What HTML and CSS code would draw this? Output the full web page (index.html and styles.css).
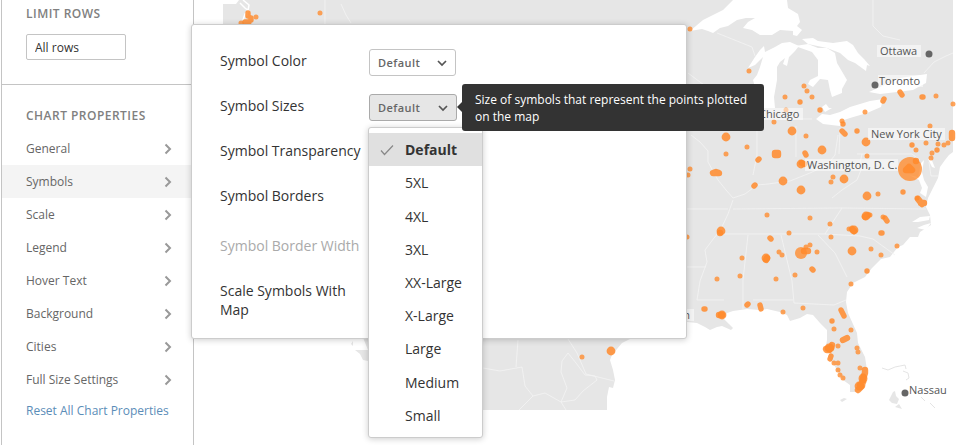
FILE: index.html
```html
<!DOCTYPE html>
<html lang="en">
<head>
    <meta charset="UTF-8">
    <meta name="viewport" content="width=device-width, initial-scale=1.0">
    <title>Chart Properties</title>
    <link rel="stylesheet" href="styles.css">
</head>
<body>

<!-- shared icons -->
<svg class="sprite" aria-hidden="true">
    <symbol id="arrow-right" viewBox="0 0 8 12"><path d="M1.5 1.5L6 6L1.5 10.5"/></symbol>
    <symbol id="arrow-down" viewBox="0 0 10 8"><path d="M1 2L5 6L9 2"/></symbol>
    <symbol id="check" viewBox="0 0 14 12"><path d="M1 6.5L4.5 10.5L13 1.5"/></symbol>
</svg>

<div class="page">
    <aside class="sidebar">
        <section class="section">
            <h2><label for="limit">LIMIT ROWS</label></h2>
            <input class="limit" id="limit" type="text" value="All rows">
        </section>

        <section class="section">
            <h2>CHART PROPERTIES</h2>
            <nav class="props">
                <button class="prop">General <svg><use href="#arrow-right"/></svg></button>
                <button class="prop active">Symbols <svg><use href="#arrow-right"/></svg></button>
                <button class="prop">Scale <svg><use href="#arrow-right"/></svg></button>
                <button class="prop">Legend <svg><use href="#arrow-right"/></svg></button>
                <button class="prop">Hover Text <svg><use href="#arrow-right"/></svg></button>
                <button class="prop">Background <svg><use href="#arrow-right"/></svg></button>
                <button class="prop">Cities <svg><use href="#arrow-right"/></svg></button>
                <button class="prop">Full Size Settings <svg><use href="#arrow-right"/></svg></button>
            </nav>
            <a class="reset" href="#">Reset All Chart Properties</a>
        </section>
    </aside>

    <main class="chart">
        <svg class="map" viewBox="194 0 765 445">
            <!-- land -->
            <path class="land" d="M223 4H236L239 0H953V152L949 155L945 160L940 167L938 178L933 188L928 198L926 207L930 215L931 225L920 232L918 237L910 237L903 245L898 247L890 257L881 259L872 268L865 277L853 283L847 292L846 302L848 313L857 333L858 343L865 357L867 370L865 383L857 392H850V385L843 380L837 370L833 363L828 357L830 353L825 350L827 340V330L820 323L813 315L807 314L800 318L790 321L787 315L780 312L767 309L760 310L747 309L733 311L727 313L723 318L729 324L733 328L731 330L722 326L717 327L710 330L705 327L697 323L687 322L660 323L630 339L622 343L612 355L610 360L613 370L615 380L613 388L609 387L607 397V410H400L368 361L363 360L360 354L355 350L368 350L360 330L223 300Z"/>
            <path class="land" d="M351 344L353 341V346Z M840 400L844 398L847 399L842 402Z M889 400L893 392L895 391L896 396L899 399L897 404L892 403Z M895 407L899 404L902 409Z"/>
            <path class="islands" d="M882 368L888 370L895 367L905 365L906 369 M903 371L908 373L909 378L906 380 M921 397L925 401 M930 403L935 408"/>

            <!-- water -->
            <path class="water" d="M690 31L703 20L723 10L733 0H787L788 8L798 14L800 22L797 26L802 30L797 36L793 35V31L780 30L772 35H760L752 30L743 28L748 22L755 18L746 18L737 20L728 26L720 28L713 33L708 31L702 29Z"/>
            <path class="water" d="M748 68L755 57L760 50L764 46L765 52L775 47L782 43L790 42L799 46L795 51L789 57L787 66L783 64L785 58L780 62L777 67V80L774 97L775 108H763L758 95L755 87L753 80L757 75L760 67L763 57L755 65Z"/>
            <path class="water" d="M795 46L808 44L818 48L827 48L835 53L837 63L847 80L842 89V93L832 97L830 90L828 80L820 79L813 87L808 84L810 80L818 76L818 60L812 52Z"/>
            <path class="water" d="M802 39L813 38L818 41L833 43L847 41L853 45L858 53L864 59L870 66L867 65L866 71L855 63L848 60L840 53L827 48L808 44Z"/>
            <path class="water" d="M822 107L826 104L829 108L832 108L825 112Z"/>
            <path class="water" d="M816 119L822 114L830 115L840 112L850 107L860 104L870 101L883 99L881 107L867 113L850 118L844 120L840 126L823 124Z"/>
            <path class="water" d="M869 92L880 87L900 78L927 74L926 83L913 90L897 92L880 94Z"/>
            <path class="water" d="M921 163L924 160L922 172L924 180L928 187L926 197L920 193L922 188L919 180L909 175L918 177Z M928 159L931 158L935 168L932 167Z M912 222L920 217L930 216L929 220L918 222Z M917 228L924 225L931 223L926 230Z"/>
            <path class="sound" d="M240 3L245 8L249 11L245 14L243 20 M243 0L249 5L247 16"/>

            <!-- borders -->
            <path class="lines" d="M325 0V24 M341 4L346 15L351 23 M873 0V26L883 36L900 40 M717 33L732 39L752 47L755 56 M688 73L704 85L708 95
                M924 73L934 62L946 56L953 53 M691 135L700 142L708 151V162L718 180L726 190L733 198L745 194L757 185L768 184L790 181L810 173L827 165L835 155L838 135
                M757 125V155L753 175 M796 126V157 M775 119H812 M840 128L839 154 M857 154H912L920 160 M862 154L860 163
                M733 200L728 214L720 231L714 238L705 250L707 262L700 281L697 300H724 M687 209H728 M733 209L842 208L926 209 M722 234H825L842 208 M825 234L860 236L873 239L895 255
                M748 235L743 280L743 309 M781 235L792 281L794 303L834 305L846 300 M818 235L835 253L847 277 M753 300H793 M832 198L842 190L857 180L863 165 M687 267H706 M929 162L931 176H938
                M483 368L500 371L522 367L525 386L533 396L545 393L561 402L575 400L583 391L597 380L595 376L585 375L576 363L568 353L562 361L561 372L567 388L561 402L566 410 M518 340L516 367 M568 339L577 353L586 374L614 381 M533 396L519 410"/>

            <!-- points: small, medium, large -->
            <path class="dots small" d="M320 13h0 M690 29h0 M749 71h0 M804 86h0 M807 91h0 M812 97h0 M785 97h0 M786 110h0 M774 122h0 M842 121h0 M865 112h0 M936 96h0 M930 126h0 M953 104h0 M747 147h0 M726 154h0 M690 169h0 M688 175h0 M806 136h0 M867 156h0 M833 177h0 M831 182h0 M878 194h0 M916 150h0 M926 143h0 M932 153h0 M931 158h0 M944 145h0 M948 143h0 M938 144h0 M917 198h0 M767 215h0 M810 218h0 M830 224h0 M883 217h0 M870 215h0 M789 233h0 M831 237h0 M897 246h0 M687 237h0 M849 229h0 M742 258h0 M779 252h0 M782 255h0 M806 247h0 M810 245h0 M817 252h0 M795 275h0 M776 279h0 M740 276h0 M717 279h0 M871 249h0 M881 255h0 M851 284h0 M783 312h0 M803 308h0 M834 329h0 M851 330h0 M838 346h0 M857 348h0 M858 352h0 M834 363h0 M838 363h0 M838 370h0 M840 375h0 M843 378h0 M860 368h0 M582 357h0 M256 17h0 M241 23h0"/>
            <path class="dots pair" d="M800 102h0 M820 110h0 M843 124h0 M884 99l-1 2 M900 92l2 3 M922 97l1 0 M842 131l3 3 M857 131h0 M759 159l-1 1 M755 185l-1 1 M903 192h0 M912 145h0 M937 150h0 M805 153l1 2 M885 218l2 3 M881 233l1 0 M770 238l1 1 M812 269l1 1 M867 271h0 M832 321h0 M748 304l-1 1 M760 305l1 4 M704 309l1 0 M841 310l3 6 M831 356l-1 3 M248 13v3 M245 22h4 M251 18v2"/>
            <path class="dots medium" d="M726 137h0 M792 131h0 M822 150h0 M866 142h0 M783 181h0 M801 190h0 M844 179h0 M867 196h0 M801 164h0 M866 216h0 M721 231h0 M854 230h0 M766 258h0 M852 251h0 M611 351h0 M722 315h0"/>
            <path class="dots cluster" d="M852 229l2 2 M766 260l1 -2 M804 251l4 0 M719 315h3 M826 349l5 -1l1 -3 M827 350h2 M843 340l4 -2 M865 370v3l-2 6l-1 7l-4 4 M860 385l3 -3 M918 199l4 5 M921 203h3 M865 217l3 -2 M802 163l2 1 M720 233h0 M775 153h3v2h-3z M713 173h6l-3 -1z M952 133v5"/>
            <path class="dots medium" d="M863 378v1 M859 386h1 M829 348h1"/>
            <circle class="dot" cx="801" cy="253" r="6"/>
            <circle class="dot" cx="910" cy="169" r="12"/>
            <path class="dots cluster" d="M906 170l3 -3l3 3z M916 161h0"/>

            <!-- cities -->
            <g class="tags">
                <rect x="877" y="45" width="44" height="12"/>
                <rect x="878" y="75" width="45" height="12"/>
                <rect x="758" y="108" width="45" height="12"/>
                <rect x="868" y="128" width="77" height="12"/>
                <rect x="805" y="159" width="93" height="12"/>
                <rect x="680" y="309" width="14" height="12"/>
            </g>
            <g class="towns">
                <circle cx="929" cy="54" r="3.5"/>
                <circle cx="875" cy="85" r="3.5"/>
                <circle cx="905" cy="393" r="3.5"/>
            </g>
            <g class="cities">
                <text x="880" y="55">Ottawa</text>
                <text x="879" y="85">Toronto</text>
                <text x="759" y="118">Chicago</text>
                <text x="871" y="138">New York City</text>
                <text x="807" y="169">Washington, D. C.</text>
                <text x="690" y="319" text-anchor="end">Houston</text>
                <text x="909" y="394">Nassau</text>
            </g>
        </svg>
    </main>

    <div class="panel">
        <div class="row">
            <label for="color">Symbol Color</label>
            <div class="picker">
                <select id="color"><option>Default</option></select>
                <svg class="caret"><use href="#arrow-down"/></svg>
            </div>
        </div>
        <div class="row">
            <label for="sizes">Symbol Sizes</label>
            <div class="picker open">
                <select id="sizes"><option>Default</option></select>
                <svg class="caret"><use href="#arrow-down"/></svg>
                <ul class="menu" role="listbox" aria-labelledby="sizes">
                    <li class="chosen" role="option" aria-selected="true"><svg><use href="#check"/></svg>Default</li>
                    <li role="option">5XL</li>
                    <li role="option">4XL</li>
                    <li role="option">3XL</li>
                    <li role="option">XX-Large</li>
                    <li role="option">X-Large</li>
                    <li role="option">Large</li>
                    <li role="option">Medium</li>
                    <li role="option">Small</li>
                </ul>
                <div class="tooltip" role="tooltip">Size of symbols that represent the points plotted on the map</div>
            </div>
        </div>
        <div class="row"><span class="name">Symbol Transparency</span></div>
        <div class="row tall"><span class="name">Symbol Borders</span></div>
        <div class="row disabled"><span class="name">Symbol Border Width</span></div>
        <div class="row"><span class="name">Scale Symbols With Map</span></div>
    </div>
</div>

</body>
</html>
```
FILE: styles.css
```css
* {
    box-sizing: border-box;
}
body {
    margin: 0;
    background: #fff;
    color: #333;
    font-family: "Open Sans", "Noto Sans", sans-serif;
    font-size: 14px;
    overflow: hidden;
}
button, input, select {
    font-family: inherit;
}
.sprite {
    display: none;
}
symbol path {
    fill: none;
    stroke: currentColor;
    stroke-width: inherit;
}
.page {
    position: relative;
    display: flex;
    min-height: 100vh;
    padding-left: 1px;
}

/* sidebar */
.sidebar {
    flex: none;
    width: 193px;
    border-left: 1px solid #c4c4c4;
    border-right: 1px solid #c4c4c4;
}
.section {
    padding: 5px 0 24px;
}
.section + .section {
    padding-top: 22px;
    border-top: 1px solid #c4c4c4;
}
h2 {
    margin: 0 0 8px;
    padding: 0 24px;
    font-size: 12px;
    line-height: 17px;
    font-weight: 600;
    letter-spacing: 0.04em;
    color: #808080;
    white-space: nowrap;
}
.limit {
    display: block;
    width: 100px;
    height: 26px;
    margin: 12px 24px 0;
    padding: 0 8px;
    border: 1px solid #c4c4c4;
    border-radius: 2px;
    font-size: 12px;
    color: #333;
}
.prop {
    display: flex;
    align-items: center;
    justify-content: space-between;
    width: 100%;
    height: 33px;
    padding: 0 21px 0 24px;
    border: none;
    background: none;
    font-size: 12px;
    color: #666;
    cursor: pointer;
}
.prop svg {
    width: 8px;
    height: 12px;
    color: #999;
    stroke-width: 2;
}
.prop.active {
    background: #f4f4f4;
}
.reset {
    display: block;
    margin-top: 6px;
    padding-left: 24px;
    font-size: 12px;
    line-height: 17px;
    color: #5b8db8;
    text-decoration: none;
    white-space: nowrap;
}

/* map */
.chart {
    flex: 1;
    min-width: 0;
}
.map {
    display: block;
    width: 100%;
}
.land {
    fill: #e6e6e6;
}
.water {
    fill: #fff;
}
.lines, .islands, .sound {
    fill: none;
    stroke: #f4f4f4;
    stroke-width: 0.8;
}
.islands {
    stroke: #ddd;
}
.sound {
    stroke: #fff;
    stroke-width: 1.5;
}
.dots {
    fill: none;
    stroke: #ff8a2b;
    stroke-linecap: round;
    stroke-linejoin: round;
    opacity: 0.85;
}
.small {
    stroke-width: 5;
    opacity: 0.78;
}
.pair {
    stroke-width: 5.4;
}
.medium {
    stroke-width: 8.8;
}
.cluster {
    stroke-width: 6.4;
}
.dot {
    fill: #ff8a2b;
    opacity: 0.78;
}
.tags rect {
    fill: #fff;
    opacity: 0.5;
}
.towns {
    fill: #666;
}
.cities {
    font-size: 11px;
    fill: #555;
}

/* symbols panel */
.panel {
    position: absolute;
    top: 24px;
    left: 191px;
    display: flex;
    flex-direction: column;
    gap: 18px;
    width: 496px;
    padding: 24px 28px 19px;
    border: 1px solid #ccc;
    border-radius: 3px;
    background: #fff;
    box-shadow: 0 1px 6px rgba(0, 0, 0, 0.2);
}
.row {
    display: grid;
    grid-template-columns: 141px 1fr;
    column-gap: 8px;
    min-height: 27px;
    align-items: start;
}
.row.tall {
    min-height: 32px;
}
.row label, .name {
    padding-top: 2px;
    line-height: 19px;
}
.disabled {
    color: #aaa;
}
.picker {
    position: relative;
    display: flex;
    align-items: center;
    width: 87px;
}
.picker select {
    appearance: none;
    width: 100%;
    height: 27px;
    padding: 0 8px;
    border: 1px solid #c4c4c4;
    border-radius: 3px;
    background: #fff;
    font-size: 11px;
    font-weight: 600;
    letter-spacing: 0.04em;
    color: #666;
}
.picker.open {
    width: 88px;
}
.picker.open select {
    background: #e6e6e6;
    border-color: #aaa;
}
.caret {
    position: absolute;
    right: 9px;
    width: 10px;
    height: 8px;
    color: #555;
    stroke-width: 1.7;
    pointer-events: none;
}

/* open list */
.menu {
    position: absolute;
    top: 33px;
    left: -1px;
    display: grid;
    grid-auto-rows: 1fr;
    width: 115px;
    height: 311px;
    margin: 0;
    padding: 5px 0;
    border: 1px solid #ccc;
    border-radius: 3px;
    background: #fff;
    box-shadow: 0 1px 6px rgba(0, 0, 0, 0.2);
    list-style: none;
}
.menu li {
    display: flex;
    align-items: center;
    padding-left: 36px;
}
.menu .chosen {
    padding-left: 11px;
    background: #e0e0e0;
    font-weight: 700;
}
.chosen svg {
    width: 14px;
    height: 12px;
    margin-right: 11px;
    color: #888;
    stroke-width: 1.2;
}
.tooltip {
    position: absolute;
    top: -10px;
    left: 93px;
    width: 302px;
    padding: 7px 13px 6px;
    border-radius: 3px;
    background: #333;
    color: #fff;
    font-size: 12px;
    font-weight: 500;
    line-height: 17px;
}
.tooltip::before {
    content: "";
    position: absolute;
    left: -5px;
    top: 18px;
    border: 5px solid transparent;
    border-left: none;
    border-right-color: #333;
}
```
